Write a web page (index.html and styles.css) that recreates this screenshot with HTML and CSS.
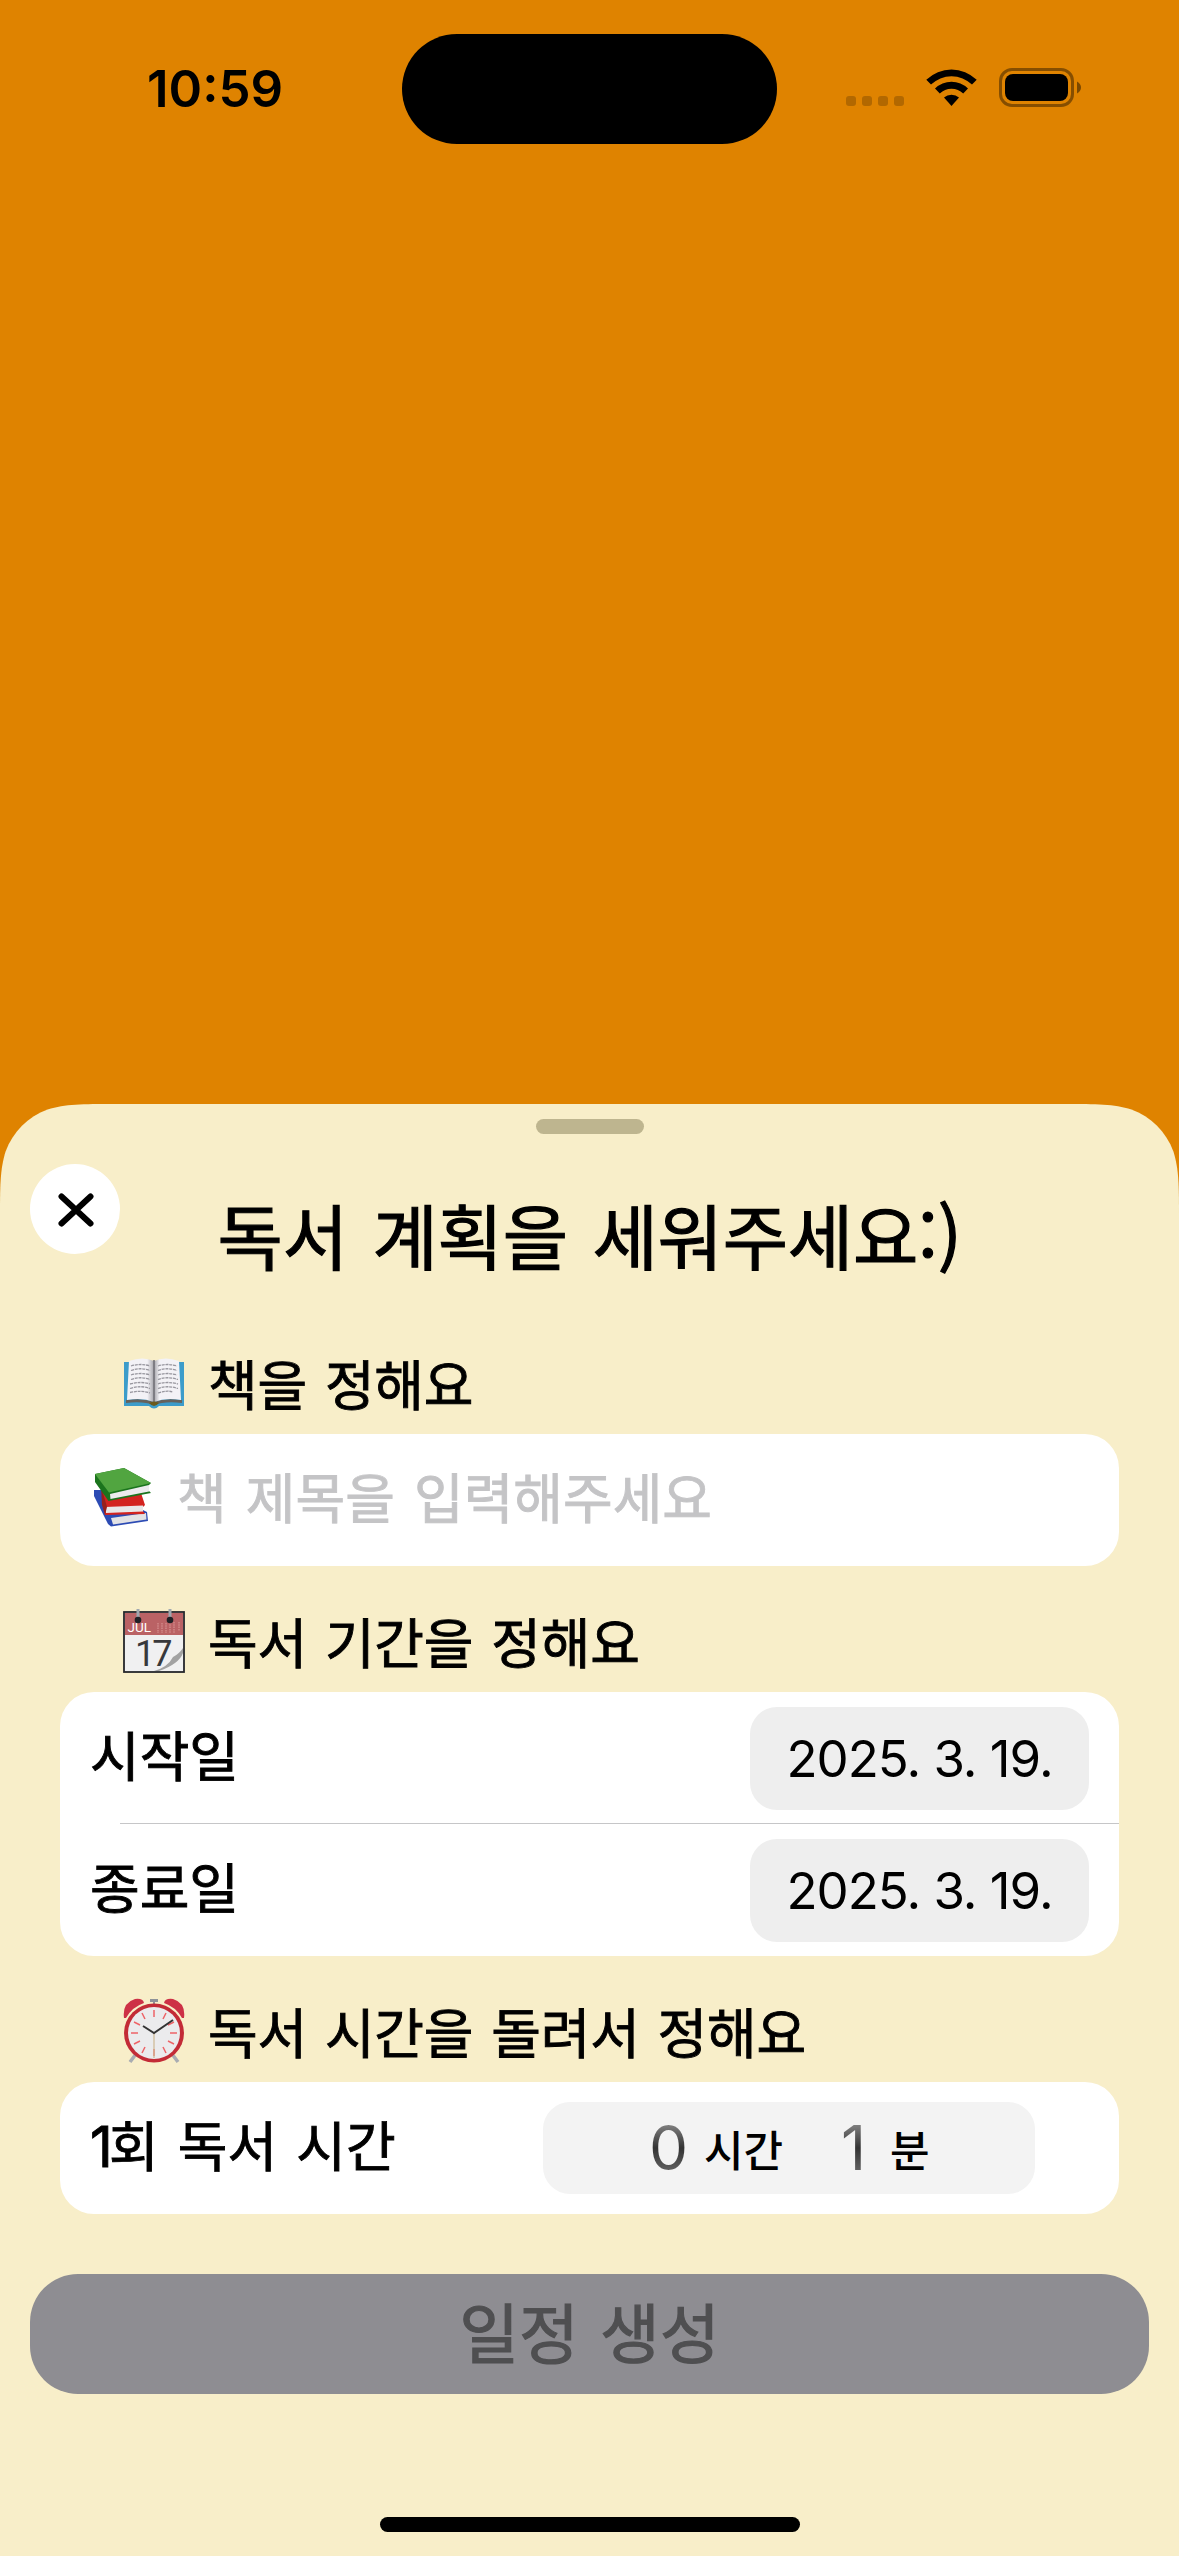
FILE: index.html
```html
<!DOCTYPE html>
<html lang="ko">
<head>
<meta charset="utf-8">
<title>독서 계획</title>
<link rel="stylesheet" href="styles.css">
</head>
<body>
<header class="status">
  <div class="clock">10:59</div>
  <div class="island"></div>
  <div class="indicators">
    <div class="dots"><i></i><i></i><i></i><i></i></div>
    <svg class="wifi" width="51" height="38" viewBox="0 0 51 38">
      <path d="M0.3 10.8A36 36 0 0 1 50.7 10.8L46 15.6A29.2 29.2 0 0 0 5 15.6Z"/>
      <path d="M9 19.6A23.6 23.6 0 0 1 42 19.6L37.2 24.6A16.8 16.8 0 0 0 13.8 24.6Z"/>
      <path d="M18 28.6A11 11 0 0 1 33 28.6L25.5 37Z"/>
    </svg>
    <svg class="battery" width="83" height="39" viewBox="0 0 83 39">
      <rect x="1.5" y="1.5" width="72" height="36" rx="11.5" fill="none" stroke="#000" stroke-opacity=".4" stroke-width="3"/>
      <rect x="6" y="6" width="63" height="27" rx="8"/>
      <path d="M78 13.500Q82 16 82 19.500T78 25.500Z" fill-opacity=".45"/>
    </svg>
  </div>
</header>
<main class="sheet">
  <div class="grabber"></div>
  <div class="head">
    <button class="close" aria-label="닫기">
      <svg width="36" height="34" viewBox="0 0 36 34"><path d="M3.500 3.500L32.500 30.500M32.500 3.500L3.500 30.500" stroke="#000" stroke-width="6" stroke-linecap="round"/></svg>
    </button>
    <h1>독서 계획을 세워주세요:)</h1>
  </div>

  <h2>
    <svg class="emoji" width="62" height="66" viewBox="0 0 62 66">
      <defs>
        <linearGradient id="page-left"><stop offset=".75" stop-color="#f3f2f6"/><stop offset="1" stop-color="#a5a4aa"/></linearGradient>
        <linearGradient id="page-right"><stop offset="0" stop-color="#a5a4aa"/><stop offset=".2" stop-color="#f3f2f6"/></linearGradient>
      </defs>
      <path d="M1 12H61V56H36Q31 61 26 56H1Z" fill="#3c9cca"/>
      <path d="M3 50Q20 48 31 52Q42 48 59 50V53Q42 51 31 55Q20 51 3 53Z" fill="#66625d"/>
      <path d="M6 11Q20 6 31 11V52Q19 47 4 50Z" fill="url(#page-left)"/>
      <path d="M56 11Q42 6 31 11V52Q43 47 58 50Z" fill="url(#page-right)"/>
      <path d="M31 10V52" stroke="#737279" stroke-width="1.600"/>
      <path d="M8 16Q18 13 27 16M8 20.500Q18 17 27 20.500M8 25Q18 22 27 25M8 29.500Q18 26 27 29.500M7 34Q18 31 27 34M7 38.500Q18 35 27 38.500M7 42.500Q18 40 27 43M35 16Q44 13 54 16M35 20.500Q44 17 54 20.500M35 25Q44 22 54 25M35 29.500Q44 26 55 29.500M35 34Q44 31 55 34M35 38.500Q44 35 55 38.500M35 43Q44 40 50 42" fill="none" stroke="#98979f" stroke-width="1.300" stroke-dasharray="3 .8"/>
      <path d="M26 53Q31 50 36 53Q31 59 26 53Z" fill="#6b5a1c"/>
    </svg>
    <span>책을 정해요</span>
  </h2>
  <section class="card">
    <div class="row">
      <svg class="books" width="60" height="62" viewBox="0 0 60 62">
        <path d="M0 23L8 23L53 45L54 54L17 59.500L14 57L0 29Z" fill="#2c4bb4"/>
        <path d="M17 51L52 46L52.500 52.500L19 57.500Z" fill="#e2e2e5"/>
        <path d="M7 19L47 26L51 38L49 40V44L51 47L11 48Z" fill="#d3231f"/>
        <path d="M11 40L49 38.500V44.500L12 46Z" fill="#e9e7e7"/>
        <path d="M7 19L13 40L11 48L8 38Z" fill="#96201d"/>
        <path d="M1 7L30 1L57 16L55 18V24L57 26L14.500 34L1 15Z" fill="#1b741d"/>
        <path d="M1 7L30 1L57 16L15 25.500Z" fill="#51a540"/>
        <path d="M16 27L55 18V24.500L16.500 32Z" fill="#ecebed"/>
      </svg>
      <span class="placeholder">책 제목을 입력해주세요</span>
    </div>
  </section>

  <h2>
    <svg class="emoji" width="62" height="66" viewBox="0 0 62 66">
      <rect x="1" y="4" width="60" height="60" fill="#f0f0f1" stroke="#25262b" stroke-width="1.800"/>
      <path d="M2 5H60V27H2Z" fill="#ba6265"/>
      <text x="4.500" y="24" font-family="Roboto, sans-serif" font-size="13.500" fill="#fff">JUL</text>
      <path d="M35 15V25M39 15V25M43 15V25M47 14V25M51 14V25M56 14V23" stroke="#d58e8e" stroke-width="1.300" stroke-dasharray="1.500 .8"/>
      <text x="12" y="57.500" font-family="Roboto, sans-serif" font-size="36" letter-spacing="-3" fill="#38383b">17</text>
      <path d="M60 40Q56 46 50 49Q45 59 31 63H60Z" fill="#a2a2a2"/>
      <path d="M60 45Q56 56 36 63H60Z" fill="#f1f1f1"/>
      <path d="M15 1V11M47 1V11" stroke="#9fa8b0" stroke-width="3"/>
      <circle cx="15" cy="12" r="3.300" fill="#202126"/><circle cx="47" cy="12" r="3.300" fill="#202126"/>
    </svg>
    <span>독서 기간을 정해요</span>
  </h2>
  <section class="card">
    <div class="row"><span>시작일</span><span class="date">2025. 3. 19.</span></div>
    <div class="row ruled"><span>종료일</span><span class="date">2025. 3. 19.</span></div>
  </section>

  <h2>
    <svg class="emoji" width="62" height="66" viewBox="0 0 62 66">
      <path d="M13 56L7 64M49 56L55 64" stroke="#a9acb2" stroke-width="3.500"/>
      <path d="M27 1H35V4H32V9H30V4H27Z" fill="#8e9298"/>
      <path d="M1 20Q-1 5 12 1Q20 0 21 5Q9 9 3 20Z" fill="#cd3146"/>
      <path d="M61 20Q63 5 50 1Q42 0 41 5Q53 9 59 20Z" fill="#cd3146"/>
      <ellipse cx="31" cy="35" rx="30" ry="29.500" fill="#c32b36"/>
      <ellipse cx="31" cy="35" rx="26" ry="26" fill="#ebebed"/>
      <path d="M31 12V19M31 51V58M8 35H15M47 35H54M19 15L22 21M43 15L40 21M19 55L22 49M43 55L40 49M11 24L17 27M51 24L45 27M11 46L17 43M51 46L45 43" stroke="#ee6468" stroke-width="1.500"/>
      <path d="M31 35V60" stroke="#cdb791" stroke-width="1.200"/>
      <path d="M20 28L31 35L50 22" fill="none" stroke="#333" stroke-width="2"/>
    </svg>
    <span>독서 시간을 돌려서 정해요</span>
  </h2>
  <section class="card">
    <div class="row timer">
      <span class="label"><span class="one">1</span>회 독서 시간</span>
      <div class="picker">
        <b>0</b><span class="unit hours">시간</span><b class="min">1</b><span class="unit minutes">분</span>
      </div>
    </div>
  </section>
  <button class="submit">일정 생성</button>
  <div class="home"></div>
</main>
</body>
</html>
```
FILE: styles.css
```css
* { box-sizing: border-box; margin: 0; padding: 0; }
body {
  width: 1179px;
  height: 2556px;
  background: #df8300;
  font-family: "Noto Sans CJK KR", sans-serif;
  color: #000;
  display: flex;
  flex-direction: column;
  overflow: hidden;
}
button { border: 0; font: inherit; }
.status {
  height: 1104px;
  flex: none;
  display: grid;
  grid-template-columns: 402px 375px 402px;
  align-items: start;
  padding-top: 34px;
}
.clock {
  padding-left: 147px;
  font: 600 51px/109px Inter, sans-serif;
}
.island { height: 110px; border-radius: 55px; background: #000; }
.indicators { display: flex; padding: 34px 0 0 69px; }
.dots { display: flex; gap: 6px; padding-top: 28px; }
.dots i { width: 10px; height: 10px; border-radius: 3px; background: #b26800; }
.wifi { margin: 1px 0 0 22px; }
.battery { margin-left: 22px; }

.sheet {
  flex: 1;
  background: #f8eec9;
  display: flex;
  flex-direction: column;
  padding: 15px 60px 0;
  clip-path: path("M0 115C0 82 0 65.400 5.600 47.600C12.800 28 28 12.800 47.600 5.600C65.400 0 82 0 115 0H1064C1097 0 1113.600 0 1131.400 5.600C1151 12.800 1166.200 28 1173.400 47.600C1179 65.400 1179 82 1179 115V1452H0Z");
}
.grabber { width: 108px; height: 15px; border-radius: 7.500px; background: #beb58f; align-self: center; flex: none; }
.head {
  height: 210px;
  flex: none;
  display: grid;
  grid-template-columns: 90px 1fr 90px;
  margin: 0 -30px;
  padding-top: 30px;
  align-items: start;
}
.close { width: 90px; height: 90px; border-radius: 50%; background: #fff; display: grid; place-items: center; padding: 2px 0 0 2px; }
h1 {
  font-size: 71px;
  font-weight: 400;
  line-height: 100px;
  margin-top: 19px;
  text-align: center;
  white-space: nowrap;
  word-spacing: 5px;
  letter-spacing: -.2px;
  -webkit-text-stroke: 1.200px #000;
}
h2 {
  height: 90px;
  flex: none;
  display: flex;
  align-items: center;
  padding: 0 0 12px 63px;
  font-size: 54px;
  font-weight: 400;
  line-height: 78px;
  letter-spacing: -.2px;
  word-spacing: 3px;
  white-space: nowrap;
  -webkit-text-stroke: .9px #000;
}
.emoji { margin-right: 23px; letter-spacing: 0; -webkit-text-stroke: 0; }
.card {
  flex: none;
  background: #fff;
  border-radius: 34px;
  margin-bottom: 36px;
}
.row {
  height: 132px;
  display: flex;
  align-items: center;
  justify-content: space-between;
  padding: 0 30px;
  font-size: 54px;
  word-spacing: 4px;
  white-space: nowrap;
  -webkit-text-stroke: .9px #000;
  position: relative;
}
.row > span:not(.date) { padding-bottom: 9px; }
.ruled::before { content: ""; position: absolute; top: -1px; left: 60px; right: 0; height: 1px; background: #c6c6c8; }
.books { margin: 0 23px 5px 4px; }
.placeholder { flex: 1; color: #c4c4c6; -webkit-text-stroke: .9px #c4c4c6; }
.label { display: flex; align-items: baseline; white-space: pre; }
.one { width: 19px; font: 400 56px/60px Inter, sans-serif; }
.date {
  width: 339px;
  height: 103px;
  border-radius: 27px;
  background: #eee;
  font: 400 51px/103px Inter, sans-serif;
  letter-spacing: -1px;
  text-align: center;
  word-spacing: 0;
  -webkit-text-stroke: 0;
}
.picker {
  width: 492px;
  height: 92px;
  margin-right: 54px;
  border-radius: 27px;
  background: #f3f3f3;
  display: flex;
  align-items: center;
  padding-left: 106px;
  -webkit-text-stroke: 0;
}
.picker b {
  width: 40px;
  font: 400 62px/92px Inter, sans-serif;
  background: linear-gradient(#888 22%, #333 50%, #666 78%);
  background-clip: text;
  -webkit-background-clip: text;
  color: transparent;
}
.unit { font-size: 43px; font-weight: 500; margin-left: 15px; line-height: 92px; }
.hours { width: 78px; margin-right: 59px; }
.minutes { margin-left: 9px; }
.submit {
  flex: none;
  height: 120px;
  margin: 24px -30px 0;
  padding-bottom: 7px;
  border-radius: 48px;
  background: #8e8d92;
  color: #4f4f51;
  font-size: 65px;
  line-height: 113px;
  word-spacing: 3px;
  -webkit-text-stroke: 1.200px #4f4f51;
}
.home { flex: none; width: 420px; height: 15px; border-radius: 7.500px; background: #000; align-self: center; margin-top: 123px; }
```
